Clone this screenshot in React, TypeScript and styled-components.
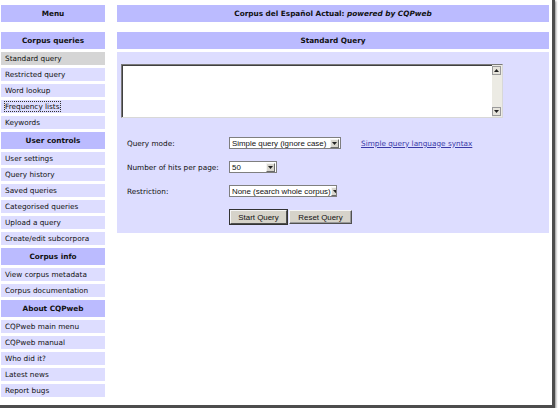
import React from "react";
import styled, { createGlobalStyle } from "styled-components";

const Global = createGlobalStyle`
  html, body { margin: 0; padding: 0; background: #ffffff; }
  body { font-family: "DejaVu Sans", Verdana, sans-serif; color: #111; }
  * { box-sizing: border-box; }
`;

const Frame = styled.div`
  width: 555px;
  height: 408px;
  background: #ffffff;
  border-right: 3px solid #4d4d4d;
  border-bottom: 3px solid #4d4d4d;
  box-shadow: 1px 1px 2px rgba(0, 0, 0, 0.45);
  overflow: hidden;
`;

const Layout = styled.div`
  display: grid;
  grid-template-columns: 104px 432px;
  column-gap: 12px;
  padding: 5px 0 0 1px;
  align-items: start;
`;

const Column = styled.div`
  display: flex;
  flex-direction: column;
  gap: 10px;
`;

const Stack = styled.div`
  display: flex;
  flex-direction: column;
  gap: 3px;
`;

const HeadCell = styled.div`
  height: 17px;
  line-height: 17px;
  background: #bbbbff;
  font-weight: bold;
  font-size: 7.3px;
  text-align: center;
  white-space: nowrap;
`;

const MenuItem = styled.div<{ $active?: boolean }>`
  height: 13px;
  line-height: 13px;
  padding-left: 4px;
  font-size: 7.3px;
  white-space: nowrap;
  background: ${(p) => (p.$active ? "#d5d5d5" : "#ddddff")};
`;

const Focused = styled.span`
  outline: 1px dotted #333;
  outline-offset: 0px;
`;

const Panel = styled.div`
  background: #ddddff;
  height: 181px;
  padding: 12px 0 0 4px;
  display: flex;
  flex-direction: column;
`;

const TextBox = styled.div`
  width: 382px;
  height: 54px;
  display: flex;
  background: #fff;
  border-top: 1px solid #7a7a7a;
  border-left: 1px solid #7a7a7a;
  border-right: 1px solid #d8d8d8;
  border-bottom: 1px solid #d8d8d8;
  box-shadow: inset 1px 1px 0 #404040;
`;

const TextInput = styled.textarea`
  flex: 1;
  border: none;
  resize: none;
  outline: none;
  background: transparent;
  font-family: "DejaVu Sans", sans-serif;
  font-size: 8px;
  overflow: hidden;
`;

const ScrollTrack = styled.div`
  width: 10px;
  background: #ecebe4;
  display: flex;
  flex-direction: column;
  justify-content: space-between;
  padding: 1px 0;
`;

const ScrollBtn = styled.div`
  width: 9px;
  height: 9px;
  background: #e6e4dc;
  border: 1px solid #9a9a9a;
  display: flex;
  align-items: center;
  justify-content: center;
`;

const FormGrid = styled.div`
  display: grid;
  grid-template-columns: 102px 132px auto;
  grid-auto-rows: 24px;
  align-items: center;
  margin: 13px 0 0 6px;
`;

const Label = styled.div`
  font-size: 7.3px;
  white-space: nowrap;
`;

const SelectBox = styled.div<{ $w: number }>`
  width: ${(p) => p.$w}px;
  height: 12px;
  background: #fff;
  border: 1px solid #7f7f7f;
  display: flex;
  align-items: center;
  justify-content: space-between;
  font-family: "Liberation Sans", Arial, sans-serif;
  font-size: 7.9px;
  padding-left: 2px;
  white-space: nowrap;
  overflow: hidden;
`;

const DropBtn = styled.div`
  width: 9px;
  height: 9px;
  margin-right: 1px;
  flex: none;
  background: #d8d6ce;
  border-top: 1px solid #f4f4f4;
  border-left: 1px solid #f4f4f4;
  border-right: 1px solid #6a6a6a;
  border-bottom: 1px solid #6a6a6a;
  display: flex;
  align-items: center;
  justify-content: center;
`;

const Link = styled.a`
  color: #3a3aa8;
  text-decoration: underline;
  font-size: 7.3px;
  white-space: nowrap;
`;

const ButtonRow = styled.div`
  grid-column: 2 / 4;
  display: flex;
  gap: 2px;
  margin-top: 4px;
`;

const Btn = styled.button<{ $w: number; $default?: boolean }>`
  width: ${(p) => p.$w}px;
  height: 14px;
  padding: 0;
  background: #d6d3ca;
  font-family: "Liberation Sans", Arial, sans-serif;
  font-size: 7.9px;
  color: #111;
  border: 1px solid;
  border-color: #f6f6f6 #505050 #505050 #f6f6f6;
  box-shadow: ${(p) => (p.$default ? "0 0 0 1px #333" : "inset -1px -1px 0 #9a9a9a")};
  margin-left: ${(p) => (p.$default ? "1px" : "0")};
`;

const Tri = ({ up }: { up?: boolean }) => (
  <svg width="5" height="3" viewBox="0 0 5 3">
    <polygon points={up ? "0,3 5,3 2.5,0" : "0,0 5,0 2.5,3"} fill="#222" />
  </svg>
);

const Select = ({ w, text }: { w: number; text: string }) => (
  <SelectBox $w={w}>
    <span>{text}</span>
    <DropBtn>
      <Tri />
    </DropBtn>
  </SelectBox>
);

const sections: { title: string; items: string[] }[] = [
  {
    title: "Corpus queries",
    items: ["Standard query", "Restricted query", "Word lookup", "Frequency lists", "Keywords"],
  },
  {
    title: "User controls",
    items: [
      "User settings",
      "Query history",
      "Saved queries",
      "Categorised queries",
      "Upload a query",
      "Create/edit subcorpora",
    ],
  },
  { title: "Corpus info", items: ["View corpus metadata", "Corpus documentation"] },
  {
    title: "About CQPweb",
    items: ["CQPweb main menu", "CQPweb manual", "Who did it?", "Latest news", "Report bugs"],
  },
];

export default function App() {
  return (
    <>
      <Global />
      <Frame>
        <Layout>
          <Column>
            <HeadCell>Menu</HeadCell>
            <Stack>
              {sections.map((s) => (
                <React.Fragment key={s.title}>
                  <HeadCell>{s.title}</HeadCell>
                  {s.items.map((it) => (
                    <MenuItem key={it} $active={it === "Standard query"}>
                      {it === "Frequency lists" ? <Focused>{it}</Focused> : it}
                    </MenuItem>
                  ))}
                </React.Fragment>
              ))}
            </Stack>
          </Column>
          <Column>
            <HeadCell>
              Corpus del Español Actual: <i>powered by CQPweb</i>
            </HeadCell>
            <Stack>
              <HeadCell>Standard Query</HeadCell>
              <Panel>
                <TextBox>
                  <TextInput />
                  <ScrollTrack>
                    <ScrollBtn>
                      <Tri up />
                    </ScrollBtn>
                    <ScrollBtn>
                      <Tri />
                    </ScrollBtn>
                  </ScrollTrack>
                </TextBox>
                <FormGrid>
                  <Label>Query mode:</Label>
                  <Select w={112} text="Simple query (ignore case)" />
                  <Link href="#">Simple query language syntax</Link>
                  <Label>Number of hits per page:</Label>
                  <Select w={48} text="50" />
                  <span />
                  <Label>Restriction:</Label>
                  <Select w={108} text="None (search whole corpus)" />
                  <span />
                  <span />
                  <ButtonRow>
                    <Btn $w={57} $default>
                      Start Query
                    </Btn>
                    <Btn $w={63}>Reset Query</Btn>
                  </ButtonRow>
                </FormGrid>
              </Panel>
            </Stack>
          </Column>
        </Layout>
      </Frame>
    </>
  );
}
